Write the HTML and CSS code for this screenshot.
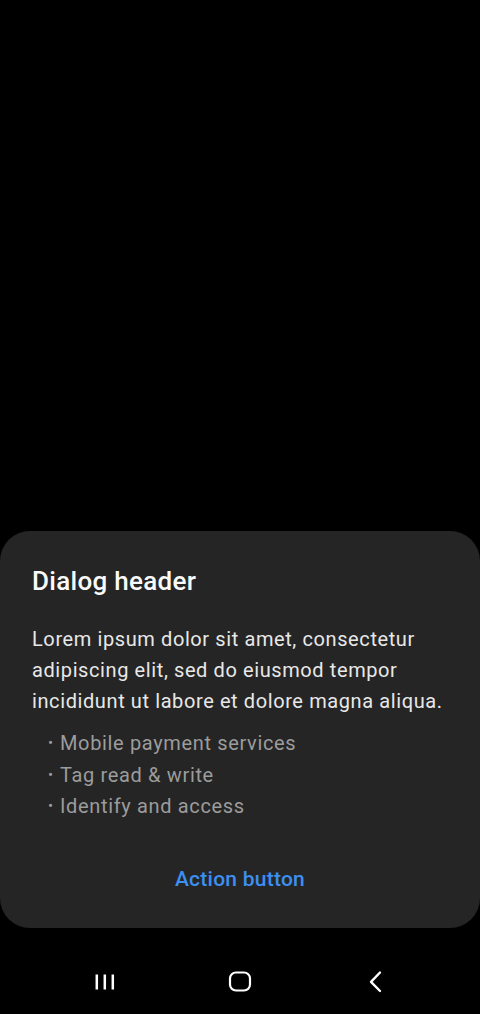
FILE: index.html
```html
<!DOCTYPE html>
<html lang="en">
<head>
<meta charset="utf-8">
<title>Dialog</title>
<link rel="stylesheet" href="styles.css">
</head>
<body>
<div class="screen">
  <div class="backdrop"></div>
  <div class="dialog">
    <h1 class="dialog-title">Dialog header</h1>
    <p class="dialog-body">Lorem ipsum dolor sit amet, consectetur adipiscing elit, sed do eiusmod tempor incididunt ut labore et dolore magna aliqua.</p>
    <ul class="dialog-list">
      <li>Mobile payment services</li>
      <li>Tag read &amp; write</li>
      <li>Identify and access</li>
    </ul>
    <div class="dialog-actions">
      <button class="action-btn" type="button">Action button</button>
    </div>
  </div>
  <nav class="navbar">
    <span class="nav-item">
      <svg width="24" height="24" viewBox="0 0 24 24"><path d="M3.8 4.5v15M11.8 4.5v15M19.8 4.5v15" stroke="#fff" stroke-width="2.5" fill="none"/></svg>
    </span>
    <span class="nav-item">
      <svg width="24" height="24" viewBox="0 0 24 24"><rect x="2" y="2.5" width="20" height="18" rx="6" ry="6" stroke="#fff" stroke-width="2.2" fill="none"/></svg>
    </span>
    <span class="nav-item">
      <svg width="24" height="24" viewBox="0 0 24 24"><path d="M16 2.5 L7 11.8 L16 21" stroke="#fff" stroke-width="2.4" fill="none" stroke-linecap="round" stroke-linejoin="round"/></svg>
    </span>
  </nav>
</div>
</body>
</html>
```
FILE: styles.css
```css
html, body {
  margin: 0;
  padding: 0;
  background: #000;
}
.screen {
  width: 480px;
  height: 1014px;
  display: flex;
  flex-direction: column;
  font-family: Roboto, "Noto Sans", sans-serif;
}
.backdrop {
  flex: 1;
}
.dialog {
  height: 397px;
  box-sizing: border-box;
  background: #252525;
  border-radius: 30px;
  padding: 34px 32px 0;
  display: flex;
  flex-direction: column;
}
.dialog-title {
  margin: 0;
  font-size: 26px;
  line-height: 32px;
  font-weight: 500;
  letter-spacing: 0.3px;
  color: #fafafa;
}
.dialog-body {
  margin: 27px 0 0;
  font-size: 20px;
  line-height: 31px;
  letter-spacing: 0.6px;
  color: #e8e8e8;
}
.dialog-list {
  margin: 11px 0 0;
  padding: 0 0 0 16px;
  list-style: none;
  font-size: 20px;
  line-height: 31.5px;
  letter-spacing: 0.65px;
  color: #9c9c9c;
}
.dialog-list li::before {
  content: "\2022";
  font-size: 15px;
  display: inline-block;
  width: 12px;
  vertical-align: 2px;
}
.dialog-actions {
  display: flex;
  justify-content: center;
  margin-top: 44px;
}
.action-btn {
  background: none;
  border: 0;
  padding: 0;
  font-family: Roboto, "Noto Sans", sans-serif;
  font-size: 21px;
  line-height: 24px;
  font-weight: 500;
  letter-spacing: 0.25px;
  color: #3d8ff0;
}
.navbar {
  height: 86px;
  display: flex;
  justify-content: center;
  align-items: center;
  gap: 111.5px;
  padding-top: 21px;
  box-sizing: border-box;
}
.nav-item {
  width: 24px;
  height: 24px;
  display: flex;
}
```
